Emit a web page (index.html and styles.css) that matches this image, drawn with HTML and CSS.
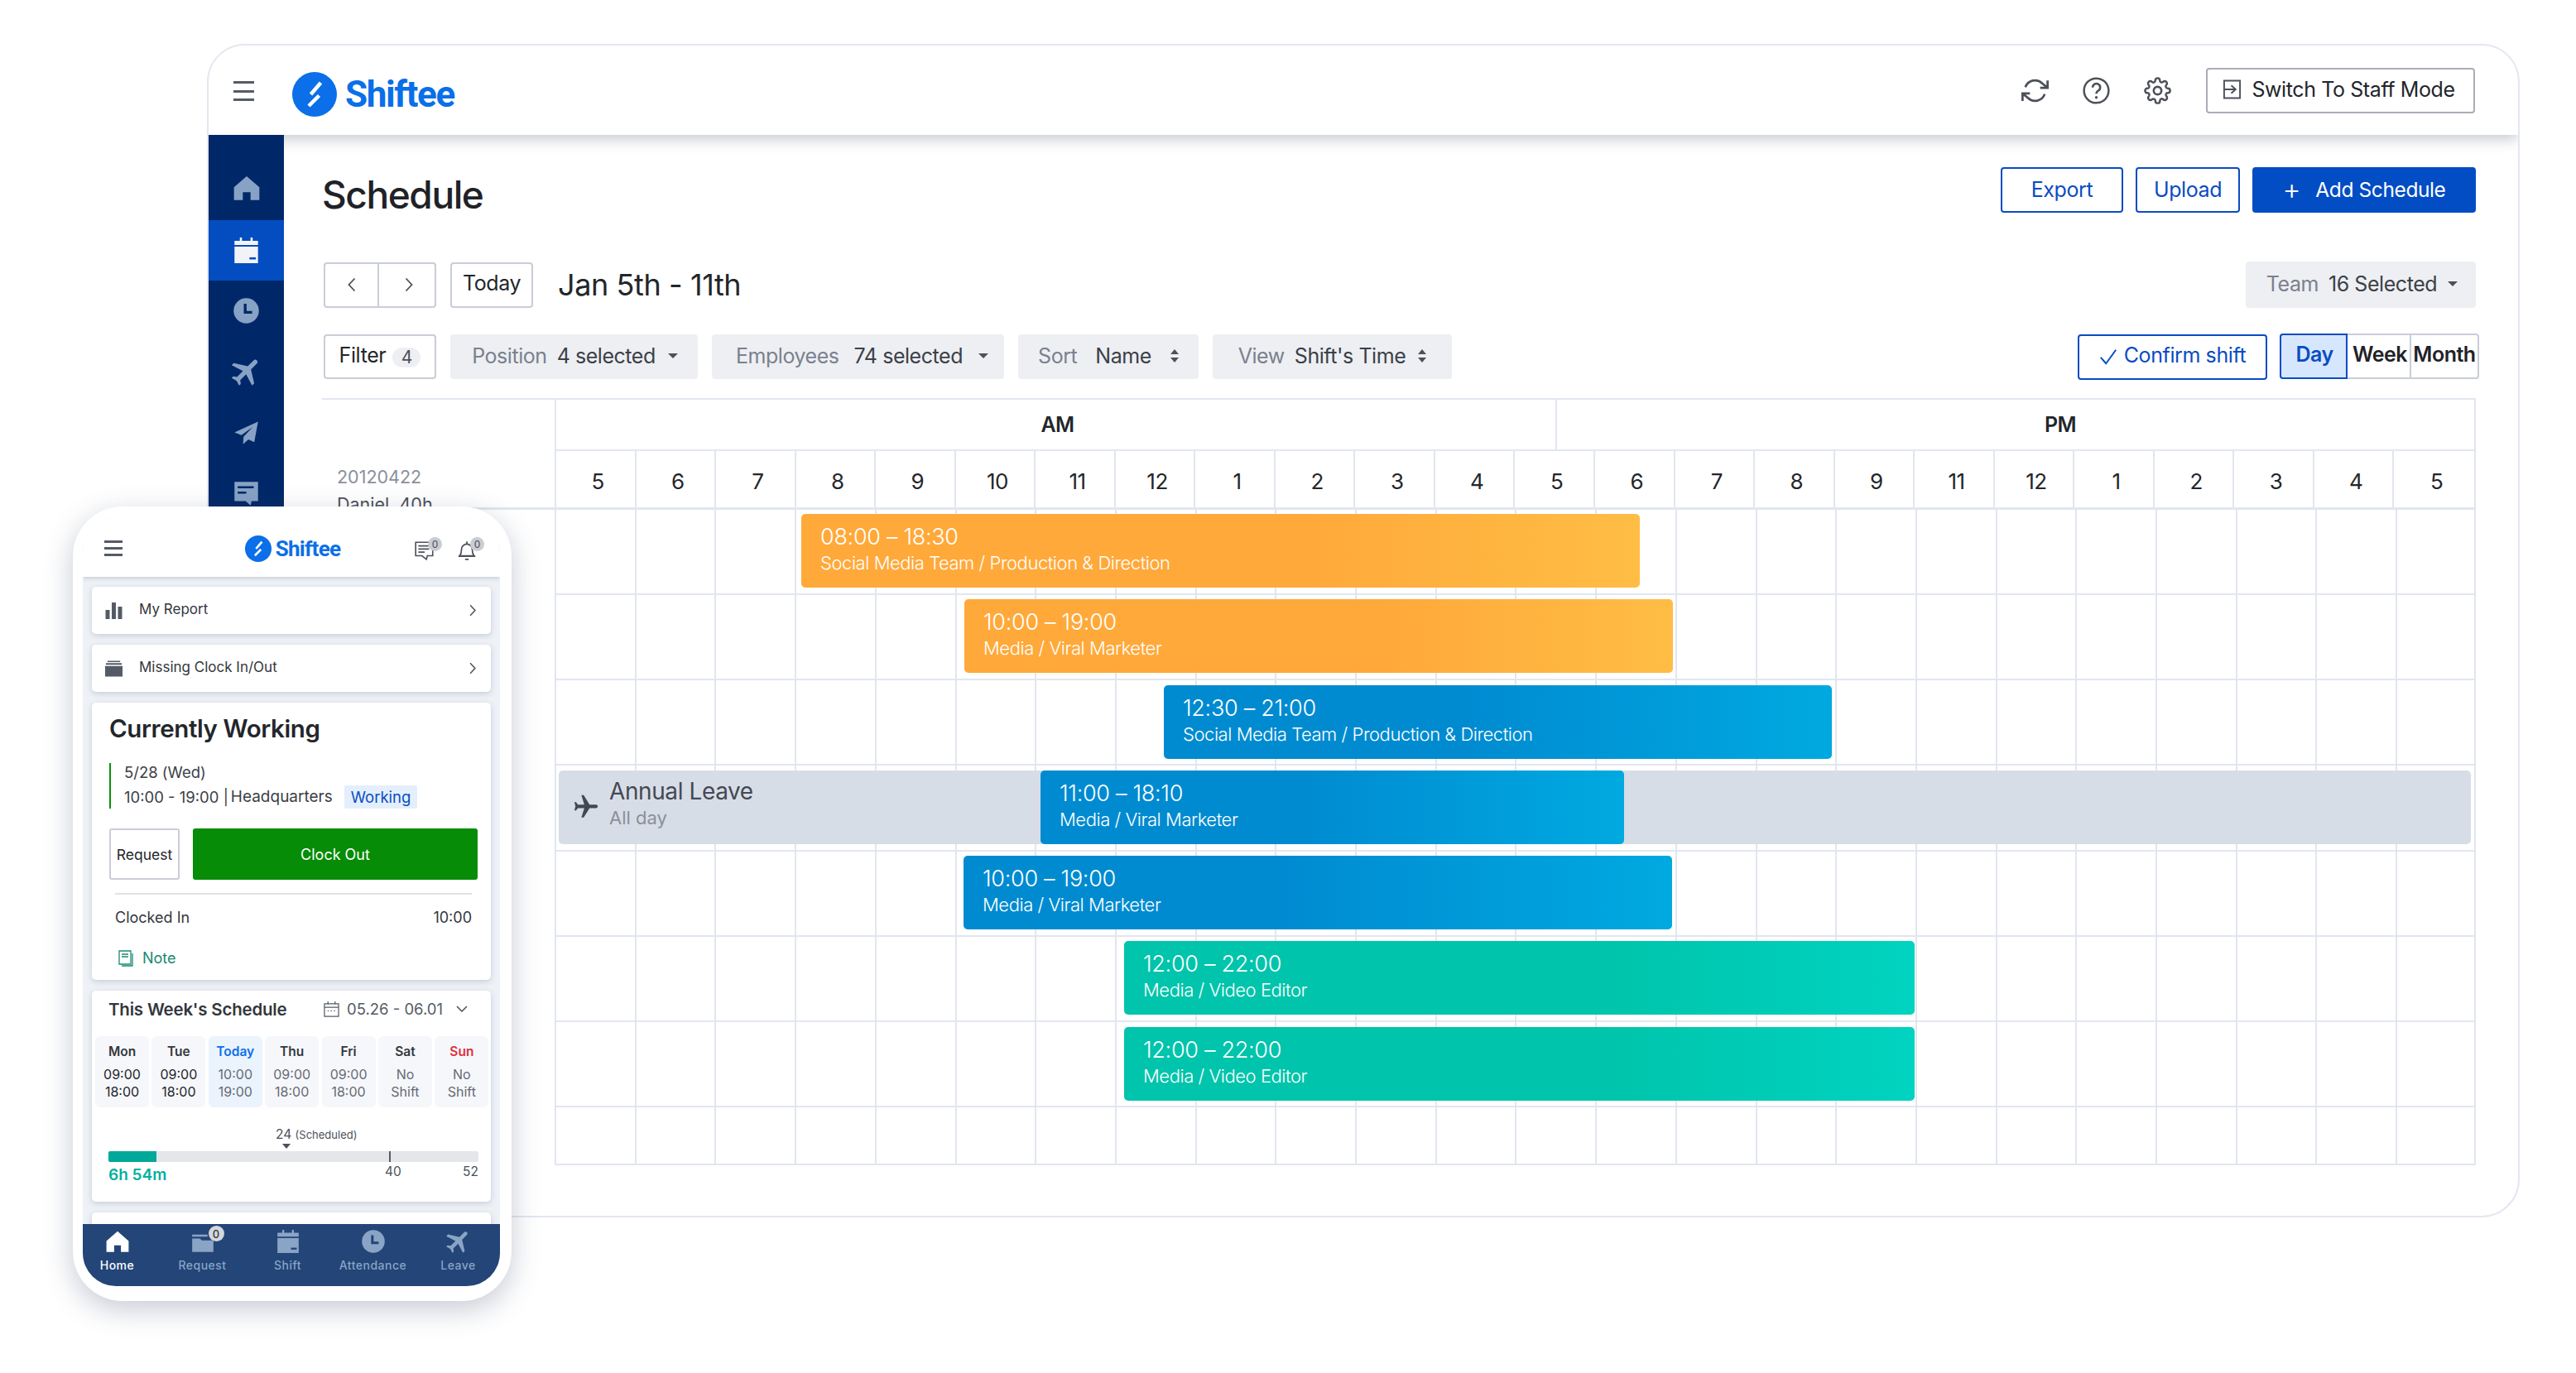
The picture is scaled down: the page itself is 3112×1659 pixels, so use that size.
FILE: index.html
```html
<!DOCTYPE html>
<html lang="en">
<head>
<meta charset="utf-8">
<title>Shiftee Schedule</title>
<link rel="stylesheet" href="styles.css">
</head>
<body>
<svg class="defs" width="0" height="0" aria-hidden="true">
  <symbol id="i-logo" viewBox="0 0 54 54"><circle cx="27" cy="27" r="27" fill="#0a6fe8"/><path d="M34.500 13 22.500 27M32.500 28.500 20 41" fill="none" stroke="#fff" stroke-width="4.500"/></symbol>
  <symbol id="i-home" viewBox="0 0 24 24"><path d="M12 1.500 0.500 11.500v11.500h8V16h7v7h8V11.500z" fill="currentColor"/></symbol>
  <symbol id="i-cal" viewBox="0 0 24 24"><path d="M6 0h2v3h8V0h2v3h5v4H1V3h5zM1 8.500h22V24H1z" fill="currentColor"/><path d="M15 18.500h6v2h-6z" fill="var(--cut)"/></symbol>
  <symbol id="i-clock" viewBox="0 0 24 24"><circle cx="12" cy="12" r="11.800" fill="currentColor"/><path d="M11 5.500v8h6.500" fill="none" stroke="var(--cut)" stroke-width="2.600"/></symbol>
  <symbol id="i-plane" viewBox="0 0 24 24"><path d="M21 16v-2l-8-5V3.500c0-.83-.67-1.500-1.500-1.500S10 2.670 10 3.500V9l-8 5v2l8-2.500V19l-2 1.500V22l3.500-1 3.500 1v-1.500L13 19v-5.500z" fill="currentColor"/></symbol>
  <symbol id="i-send" viewBox="0 0 24 24"><path d="M23 2 1 12l6.500 2.500L18 7l-8.500 9-.5 7 5-4.500 5.500 2.500z" fill="currentColor"/></symbol>
  <symbol id="i-chat" viewBox="0 0 24 24"><path d="M1 1h22v18h-6l-1 4-4.500-4H1z" fill="currentColor"/><path d="M4 5h15v2H4zM4 10h8v2H4z" fill="var(--cut)"/></symbol>
  <symbol id="i-chev" viewBox="0 0 12 20"><path d="M2.500 2.500 9.500 10l-7 7.500" fill="none" stroke="currentColor" stroke-width="1.800"/></symbol>
</svg>

<section class="window">
  <header class="topbar">
    <div class="burger"><i></i><i></i><i></i></div>
    <svg class="logo-mark"><use href="#i-logo"/></svg>
    <span class="logo-text">Shiftee</span>
    <div class="top-actions">
      <svg class="top-icon" viewBox="0 0 24 24"><path d="M23 3v6.500h-6.500M1 21v-6.500h6.500M3.500 9a9 9 0 0 1 14.800-3.400L23 9.500M1 14.500l4.700 3.900A9 9 0 0 0 20.500 15" fill="none" stroke="#4c5159" stroke-width="2"/></svg>
      <svg class="top-icon" viewBox="0 0 24 24"><circle cx="12" cy="12" r="10.800" fill="none" stroke="#4c5159" stroke-width="1.800"/><path d="M8.800 9.200a3.300 3.300 0 1 1 5 2.800c-1.200.7-1.800 1.300-1.800 2.800" fill="none" stroke="#4c5159" stroke-width="1.900"/><circle cx="12" cy="18" r="1.200" fill="#4c5159"/></svg>
      <svg class="top-icon" viewBox="0 0 24 24"><circle cx="12" cy="12" r="3.400" fill="none" stroke="#4c5159" stroke-width="1.900"/><path d="M19.400 15a1.650 1.650 0 0 0 .33 1.820l.06.06a2 2 0 0 1 0 2.830 2 2 0 0 1-2.830 0l-.06-.06a1.650 1.650 0 0 0-1.820-.33 1.650 1.650 0 0 0-1 1.510V21a2 2 0 0 1-2 2 2 2 0 0 1-2-2v-.09A1.650 1.650 0 0 0 9 19.400a1.650 1.650 0 0 0-1.820.33l-.06.06a2 2 0 0 1-2.830 0 2 2 0 0 1 0-2.830l.06-.06a1.650 1.650 0 0 0 .33-1.820 1.650 1.650 0 0 0-1.510-1H3a2 2 0 0 1-2-2 2 2 0 0 1 2-2h.09A1.650 1.650 0 0 0 4.600 9a1.650 1.650 0 0 0-.33-1.820l-.06-.06a2 2 0 0 1 0-2.830 2 2 0 0 1 2.830 0l.06.06a1.650 1.650 0 0 0 1.820.33H9a1.650 1.650 0 0 0 1-1.510V3a2 2 0 0 1 2-2 2 2 0 0 1 2 2v.09a1.650 1.650 0 0 0 1 1.510 1.650 1.650 0 0 0 1.820-.33l.06-.06a2 2 0 0 1 2.830 0 2 2 0 0 1 0 2.830l-.06.06a1.650 1.650 0 0 0-.33 1.820V9a1.650 1.650 0 0 0 1.510 1H21a2 2 0 0 1 2 2 2 2 0 0 1-2 2h-.09a1.650 1.650 0 0 0-1.510 1z" fill="none" stroke="#4c5159" stroke-width="1.800"/></svg>
      <button class="btn btn-staff">
        <svg class="staff-icon" viewBox="0 0 24 26"><path d="M2 2h20v22H2zM2 13h14M11 8l5.500 5-5.500 5" fill="none" stroke="#4c5159" stroke-width="2"/></svg>
        Switch To Staff Mode
      </button>
    </div>
  </header>

  <div class="app-body">
    <nav class="sidebar">
      <a class="side-item"><svg class="ic-home"><use href="#i-home"/></svg></a>
      <a class="side-item active"><svg><use href="#i-cal"/></svg></a>
      <a class="side-item"><svg><use href="#i-clock"/></svg></a>
      <a class="side-item"><svg class="rot45 ic-plane"><use href="#i-plane"/></svg></a>
      <a class="side-item"><svg><use href="#i-send"/></svg></a>
      <a class="side-item"><svg><use href="#i-chat"/></svg></a>
    </nav>

    <main class="main">
      <div class="row title-row">
        <h1 class="page-title">Schedule</h1>
        <div class="row-end">
          <button class="btn btn-outline btn-export">Export</button>
          <button class="btn btn-outline btn-upload">Upload</button>
          <button class="btn btn-primary"><span class="plus">+</span>Add Schedule</button>
        </div>
      </div>

      <div class="row date-row">
        <div class="pager">
          <button class="pager-btn"><svg viewBox="0 0 12 20"><path d="M9.500 2.500 2.500 10l7 7.500" fill="none" stroke="#4c5159" stroke-width="1.800"/></svg></button>
          <button class="pager-btn"><svg viewBox="0 0 12 20"><path d="M2.500 2.500 9.500 10l-7 7.500" fill="none" stroke="#4c5159" stroke-width="1.800"/></svg></button>
        </div>
        <button class="btn btn-today">Today</button>
        <span class="date-range">Jan 5th - 11th</span>
        <button class="pill pill-team"><span class="pill-label">Team</span><span>16 Selected</span><i class="caret"></i></button>
      </div>

      <div class="row filter-row">
        <button class="btn btn-filter">Filter <span class="count">4</span></button>
        <button class="pill pill-pos"><span class="pill-label">Position</span><span>4 selected</span><i class="caret"></i></button>
        <button class="pill pill-emp"><span class="pill-label">Employees</span><span>74 selected</span><i class="caret"></i></button>
        <button class="pill pill-sort"><span class="pill-label">Sort</span><span>Name</span><i class="updown"></i></button>
        <button class="pill pill-view"><span class="pill-label">View</span><span>Shift's Time</span><i class="updown"></i></button>
        <div class="row-end">
          <button class="btn btn-outline btn-confirm"><svg viewBox="0 0 24 24"><path d="M2 13l7 8L22 3" fill="none" stroke="#0a4cc2" stroke-width="2.200"/></svg>Confirm shift</button>
          <div class="seg">
            <span class="seg-item seg-on">Day</span>
            <span class="seg-item seg-week">Week</span>
            <span class="seg-item seg-month">Month</span>
          </div>
        </div>
      </div>

      <div class="timetable">
        <div class="tt-head">
          <div class="tt-owner">
            <div class="owner-id">20120422</div>
            <div class="owner-name">Daniel. 40h</div>
          </div>
          <div class="tt-scale">
            <div class="half-row">
              <div class="half half-am">AM</div>
              <div class="half half-pm">PM</div>
            </div>
            <div class="hours">
              <span>5</span><span>6</span><span>7</span><span>8</span><span>9</span><span>10</span><span>11</span><span>12</span><span>1</span><span>2</span><span>3</span><span>4</span><span>5</span><span>6</span><span>7</span><span>8</span><span>9</span><span>11</span><span>12</span><span>1</span><span>2</span><span>3</span><span>4</span><span>5</span>
            </div>
          </div>
        </div>
        <div class="tt-rows">
          <div class="tt-row">
            <div class="shift shift-orange" style="margin-left:296px;width:1013px"><b>08:00 – 18:30</b><small>Social Media Team / Production &amp; Direction</small></div>
          </div>
          <div class="tt-row">
            <div class="shift shift-orange" style="margin-left:493px;width:856px"><b>10:00 – 19:00</b><small>Media / Viral Marketer</small></div>
          </div>
          <div class="tt-row">
            <div class="shift shift-blue" style="margin-left:734px;width:807px"><b>12:30 – 21:00</b><small>Social Media Team / Production &amp; Direction</small></div>
          </div>
          <div class="tt-row">
            <div class="leave">
              <svg class="leave-icon"><use href="#i-plane"/></svg>
              <div class="leave-text"><b>Annual Leave</b><small>All day</small></div>
              <div class="shift shift-blue shift-over" style="left:582px;width:705px"><b>11:00 – 18:10</b><small>Media / Viral Marketer</small></div>
            </div>
          </div>
          <div class="tt-row">
            <div class="shift shift-blue" style="margin-left:492px;width:856px"><b>10:00 – 19:00</b><small>Media / Viral Marketer</small></div>
          </div>
          <div class="tt-row">
            <div class="shift shift-teal" style="margin-left:686px;width:955px"><b>12:00 – 22:00</b><small>Media / Video Editor</small></div>
          </div>
          <div class="tt-row">
            <div class="shift shift-teal" style="margin-left:686px;width:955px"><b>12:00 – 22:00</b><small>Media / Video Editor</small></div>
          </div>
          <div class="tt-row tt-row-last"></div>
        </div>
      </div>
    </main>
  </div>
</section>

<section class="phone">
  <div class="screen">
    <header class="ph-top">
      <div class="burger ph-burger"><i></i><i></i><i></i></div>
      <div class="ph-logo"><svg class="ph-mark"><use href="#i-logo"/></svg><span>Shiftee</span></div>
      <div class="ph-icons">
        <span class="ph-ico">
          <svg viewBox="0 0 24 24"><path d="M2 3h19v15h-6l-1 4-5-4H2zM5 7h12M5 10.500h12M5 14h7" fill="none" stroke="#4c5159" stroke-width="1.500"/></svg>
          <em>0</em>
        </span>
        <span class="ph-ico">
          <svg viewBox="0 0 24 24"><path d="M4 18c1.500-2 2-3 2-7a6 6 0 0 1 12 0c0 4 .5 5 2 7zM2.500 18.500h19M10 22h4M12 2v3" fill="none" stroke="#4c5159" stroke-width="1.600"/></svg>
          <em>0</em>
        </span>
      </div>
    </header>

    <div class="ph-content">
      <div class="card link-card">
        <svg class="link-icon" viewBox="0 0 20 20"><path d="M0 9h5v11H0zM7.500 0h5v20h-5zM15 5h5v15h-5z" fill="#555b66"/></svg>
        <span class="link-text">My Report</span>
        <svg class="link-chev"><use href="#i-chev"/></svg>
      </div>
      <div class="card link-card">
        <svg class="link-icon" viewBox="0 0 22 20"><path d="M3 0h16v1.500H3zM1 3h20v2H1zM0 6.500h22V20H0z" fill="#555b66"/></svg>
        <span class="link-text">Missing Clock In/Out</span>
        <svg class="link-chev"><use href="#i-chev"/></svg>
      </div>

      <div class="card work-card">
        <h2 class="work-title">Currently Working</h2>
        <div class="work-info">
          <div class="work-date">5/28 (Wed)</div>
          <div class="work-line">10:00 - 19:00 |<span class="work-site">Headquarters</span><span class="tag">Working</span></div>
        </div>
        <div class="work-btns">
          <button class="btn-request">Request</button>
          <button class="btn-clock">Clock Out</button>
        </div>
        <div class="clocked"><span>Clocked In</span><span>10:00</span></div>
        <div class="note">
          <svg viewBox="0 0 18 20"><path d="M1 1h14v16H1zM17 4v15H4M4 5h8M4 8h8" fill="none" stroke="#1a8a70" stroke-width="1.300"/></svg>
          Note
        </div>
      </div>

      <div class="card week-card">
        <div class="week-head">
          <h3>This Week's Schedule</h3>
          <div class="week-range">
            <svg class="week-cal" viewBox="0 0 20 20"><path d="M1 3h18v16H1zM1 7.500h18M5.500 0v4M14.500 0v4M5 12h1.500M9 12h1.500M13 12h1.500" fill="none" stroke="#555b66" stroke-width="1.300"/></svg>
            05.26 - 06.01
            <svg class="week-chev" viewBox="0 0 14 8"><path d="M1 1l6 6 6-6" fill="none" stroke="#4c5159" stroke-width="1.500"/></svg>
          </div>
        </div>
        <div class="days">
          <div class="day day-dark"><b>Mon</b><span>09:00</span><span>18:00</span></div>
          <div class="day day-dark"><b>Tue</b><span>09:00</span><span>18:00</span></div>
          <div class="day day-today"><b>Today</b><span>10:00</span><span>19:00</span></div>
          <div class="day"><b>Thu</b><span>09:00</span><span>18:00</span></div>
          <div class="day"><b>Fri</b><span>09:00</span><span>18:00</span></div>
          <div class="day"><b>Sat</b><span>No</span><span>Shift</span></div>
          <div class="day day-sun"><b>Sun</b><span>No</span><span>Shift</span></div>
        </div>
        <div class="meter">
          <div class="meter-flag">24 <small>(Scheduled)</small></div>
          <i class="meter-arrow"></i>
          <div class="meter-track"><i class="meter-fill"></i><i class="meter-tick"></i></div>
          <div class="meter-scale"><b>6h 54m</b><span class="m40">40</span><span class="m52">52</span></div>
        </div>
      </div>
      <div class="card stub-card"></div>
    </div>

    <nav class="tabbar">
      <div class="tabs">
        <a class="tab tab-on"><svg><use href="#i-home"/></svg>Home</a>
        <a class="tab"><span class="tab-ico"><svg viewBox="0 0 24 24"><path d="M1 5h16v2H1zM1 9h8l2 2h12v12H1z" fill="currentColor"/></svg><em>0</em></span>Request</a>
        <a class="tab tab-cut"><svg><use href="#i-cal"/></svg>Shift</a>
        <a class="tab tab-cut"><svg><use href="#i-clock"/></svg>Attendance</a>
        <a class="tab"><svg class="rot45 tab-plane"><use href="#i-plane"/></svg>Leave</a>
      </div>
    </nav>
  </div>
</section>
</body>
</html>
```

FILE: styles.css
```css
* { box-sizing: border-box; }
html, body { margin: 0; padding: 0; }
body {
  position: relative;
  width: 3112px;
  height: 1659px;
  overflow: hidden;
  background: #fff;
  font-family: Inter, "Noto Sans", sans-serif;
  color: #23262b;
  padding: 53px 0 0 250px;
}
.defs { position: absolute; }
button { font-family: inherit; margin: 0; cursor: pointer; }
h1, h2, h3 { margin: 0; }

/* Desktop window */
.window {
  width: 2794px;
  height: 1418px;
  background: #fff;
  border: 2px solid #e3e7ef;
  border-radius: 46px;
  overflow: hidden;
  display: flex;
  flex-direction: column;
}
.topbar {
  flex: none;
  height: 108px;
  display: flex;
  align-items: center;
  padding-left: 30px;
  background: #fff;
  box-shadow: 0 5px 16px rgba(50, 60, 85, .28);
  position: relative;
  z-index: 1;
}
.burger { width: 25px; display: flex; flex-direction: column; gap: 7.500px; margin-top: 2px; }
.burger i { display: block; height: 3px; background: #555b66; }
.logo-mark { width: 54px; height: 54px; margin: 9px 0 0 46px; }
.logo-text {
  margin: 9px 0 0 10px;
  font-family: Roboto, Inter, sans-serif;
  color: #0a6fe8;
  font-size: 44px;
  font-weight: 700;
  letter-spacing: -1.400px;
}
.top-actions {
  margin-left: auto;
  margin-right: 52px;
  display: flex;
  align-items: center;
}
.top-icon { width: 33px; height: 33px; margin-right: 41px; }
.top-icon:nth-child(3) { margin-right: 42px; }

.btn {
  height: 55px;
  display: inline-flex;
  align-items: center;
  justify-content: center;
  background: #fff;
  border: 2px solid #c9cdd6;
  border-radius: 4px;
  font-size: 25px;
  letter-spacing: -.400px;
  color: #23262b;
  padding: 0 0 2px;
}
.btn-staff { width: 325px; border-color: #a9adb8; gap: 12px; padding-right: 4px; }
.staff-icon { width: 23px; height: 26px; }
.btn-outline { border-color: #0a4cc2; color: #0a4cc2; }
.btn-export { width: 148px; }
.btn-upload { width: 126px; }
.btn-primary {
  width: 270px;
  background: #034dc4;
  border-color: #034dc4;
  color: #fff;
  font-size: 24.500px;
}
.plus { font-size: 34px; font-weight: 300; margin-right: 18px; line-height: 1; }

.app-body { flex: 1; display: flex; min-height: 0; }
.sidebar {
  flex: none;
  width: 91px;
  padding-top: 29px;
  background: #002868;
  position: relative;
  z-index: 2;
  --cut: #002868;
}
.side-item {
  display: flex;
  align-items: center;
  justify-content: center;
  height: 73.500px;
  color: #87a2c5;
}
.side-item:first-child { padding-bottom: 4px; }
.side-item svg { width: 31px; height: 31px; }
.side-item .ic-home { width: 32px; height: 32px; }
.side-item .ic-plane { width: 44px; height: 44px; }
.side-item.active { background: #034dc0; color: #f1f3f7; --cut: #034dc0; }
.rot45 { transform: rotate(45deg); }

.main { flex: 1; min-width: 0; padding: 39px 51px 0 46px; }
.row { display: flex; align-items: center; }
.row-end { margin-left: auto; display: flex; align-items: center; }
.title-row { height: 55px; }
.title-row .row-end { gap: 15px; }
.page-title { font-size: 46px; font-weight: 500; letter-spacing: -1.400px; color: #1f2227; margin-top: 10px; }

.date-row { height: 56px; margin-top: 59px; }
.pager {
  display: flex;
  width: 136px;
  height: 55px;
  margin-left: 2px;
  border: 2px solid #c9cdd6;
  border-radius: 4px;
}
.pager-btn {
  flex: 1;
  background: none;
  border: 0;
  display: flex;
  align-items: center;
  justify-content: center;
  padding: 0;
}
.pager-btn + .pager-btn { border-left: 2px solid #c9cdd6; padding-left: 4px; }
.pager-btn svg { width: 12px; height: 20px; }
.btn-today { width: 100px; margin-left: 17px; padding-bottom: 4px; }
.date-range { margin-left: 30px; font-size: 36px; letter-spacing: -.400px; color: #23262b; }

.pill {
  height: 54px;
  display: inline-flex;
  align-items: center;
  justify-content: center;
  gap: 12px;
  border: 0;
  border-radius: 4px;
  background: #edeff3;
  font-size: 25px;
  letter-spacing: -.450px;
  color: #3c4047;
  padding: 0 0 2px;
}
.pill-label { color: #7b818e; }
.pill-team { height: 56px; width: 278px; margin-left: auto; padding: 0 0 3px 3px; }
.pill-team .caret { margin-left: 1px; }
.caret {
  width: 0;
  height: 0;
  border-left: 6px solid transparent;
  border-right: 6px solid transparent;
  border-top: 6px solid #4c5159;
  margin-left: 3px;
}
.updown { position: relative; width: 10px; height: 16px; margin-left: 3px; }
.updown::before, .updown::after {
  content: "";
  position: absolute;
  left: 0;
  border-left: 5px solid transparent;
  border-right: 5px solid transparent;
}
.updown::before { top: 0; border-bottom: 6px solid #4c5159; }
.updown::after { bottom: 0; border-top: 6px solid #4c5159; }

.filter-row { height: 54px; margin-top: 32px; gap: 17px; }
.btn-filter { width: 136px; height: 54px; margin-left: 2px; gap: 8px; padding-bottom: 5px; }
.count {
  width: 34px;
  height: 24px;
  margin-top: 6px;
  border-radius: 12px;
  background: #edeff3;
  color: #4c5159;
  font-size: 21px;
  display: inline-flex;
  align-items: center;
  justify-content: center;
}
.pill-pos { width: 299px; padding-left: 2px; }
.pill-emp { width: 353px; gap: 18px; padding-left: 10px; }
.pill-emp .caret { margin-left: 1px; }
.pill-sort { width: 218px; gap: 22px; }
.pill-sort .updown { margin-left: 1px; }
.pill-view { width: 289px; }
.filter-row .row-end { gap: 15px; }
.btn-confirm { width: 229px; gap: 8px; padding-bottom: 5px; }
.btn-confirm svg { width: 22px; height: 22px; margin-top: 5px; }
.seg {
  display: flex;
  width: 241px;
  height: 55px;
  margin-right: -4px;
  margin-top: -2px;
  border: 2px solid #c9cdd6;
  border-left: 0;
  border-radius: 4px;
}
.seg-item {
  display: flex;
  align-items: center;
  justify-content: center;
  font-size: 25px;
  font-weight: 600;
  letter-spacing: -.500px;
  color: #1f2227;
  padding-bottom: 5px;
}
.seg-on {
  width: 82px;
  margin: -2px 0;
  padding-left: 2px;
  background: #d6e6fc;
  border: 2px solid #0a4cc2;
  border-radius: 4px 0 0 4px;
  color: #0a4cc2;
}
.seg-week { width: 77px; padding-left: 3px; border-right: 2px solid #c9cdd6; }
.seg-month { width: 80px; }

/* Timetable */
.timetable { margin-top: 23px; font-size: 24px; }
.tt-head {
  display: flex;
  border-top: 2px solid #e1e6ef;
  border-bottom: 3px solid #e1e6ef;
  height: 134.500px;
}
.tt-owner { width: 281px; padding: 80px 0 0 18px; overflow: hidden; }
.owner-id { font-size: 21.500px; color: #8a909c; line-height: 26px; }
.owner-name { font-size: 21.500px; color: #4c5159; line-height: 30px; margin-top: 5px; }
.tt-scale {
  flex: 1;
  min-width: 0;
  display: flex;
  flex-direction: column;
  border-left: 2px solid #e1e6ef;
  border-right: 2px solid #e1e6ef;
}
.half-row {
  flex: none;
  height: 62px;
  display: flex;
  border-bottom: 2px solid #e1e6ef;
  font-size: 25px;
  font-weight: 600;
  letter-spacing: -.500px;
}
.half { display: flex; align-items: center; justify-content: center; }
.half-am { width: 1209px; border-right: 2px solid #e1e6ef; padding-left: 4px; }
.half-pm { flex: 1; padding-left: 108px; }
.hours {
  flex: 1;
  display: grid;
  grid-template-columns: repeat(24, 1fr);
  font-size: 26px;
  letter-spacing: -.500px;
}
.hours span {
  display: flex;
  align-items: center;
  justify-content: center;
  padding: 6px 0 0 6px;
  border-right: 2px solid #e1e6ef;
}
.hours span:last-child { border-right: 0; }

.tt-rows {
  margin-left: 281px;
  border-left: 2px solid #e1e6ef;
  border-right: 2px solid #e1e6ef;
}
.tt-row {
  height: 103.250px;
  padding-top: 5.500px;
  border-bottom: 2px solid #e1e6ef;
  background-image: repeating-linear-gradient(90deg, transparent 0 94.700px, #e1e6ef 94.700px 96.700px);
}
.tt-row-last { height: 70px; }

.shift {
  height: 89px;
  border-radius: 5px;
  padding: 10px 0 0 23px;
  color: #fff;
  overflow: hidden;
  white-space: nowrap;
}
.shift b { display: block; font-size: 27px; font-weight: 300; letter-spacing: -.300px; line-height: 35px; }
.shift small { display: block; font-size: 22px; font-weight: 300; line-height: 29px; letter-spacing: -.450px; }
.shift-orange { background: linear-gradient(90deg, #ffa93a 0 60%, #ffbd45 100%); }
.shift-blue { background: linear-gradient(90deg, #008bd1 0 45%, #00a9e0 100%); }
.shift-teal { background: linear-gradient(90deg, #00c4ab 0 60%, #00d3c0 100%); }

.leave {
  position: relative;
  height: 89px;
  margin: 0 4px 0 3px;
  background: #d7dde6;
  border-radius: 5px;
  display: flex;
  align-items: center;
  padding-left: 16px;
}
.leave-icon { width: 34px; height: 34px; color: #434954; transform: rotate(90deg); }
.leave-text { margin: -8px 0 0 11px; }
.leave-text b { display: block; font-size: 28px; font-weight: 400; letter-spacing: -.400px; color: #434954; line-height: 34px; }
.leave-text small { display: block; font-size: 22px; color: #8a909c; line-height: 30px; }
.shift-over { position: absolute; top: 0; }

/* Phone */
.phone {
  position: absolute;
  left: 88px;
  top: 612px;
  width: 530px;
  height: 960px;
  padding: 14px 14px 18px 12px;
  background: #fff;
  border-radius: 60px;
  box-shadow: 0 10px 34px rgba(50, 65, 100, .28);
  z-index: 5;
}
.screen {
  position: relative;
  height: 100%;
  background: #eef2f7;
  border-radius: 40px;
  overflow: hidden;
  display: flex;
  flex-direction: column;
}
.ph-top {
  flex: none;
  height: 71px;
  display: grid;
  grid-template-columns: 1fr auto 1fr;
  align-items: center;
  padding: 2px 27px 0 26px;
  background: #fff;
  box-shadow: 0 2px 5px rgba(50, 60, 85, .2);
  position: relative;
}
.ph-burger { width: 22px; gap: 5px; margin-top: 0; }
.ph-burger i { height: 3px; }
.ph-logo {
  display: flex;
  align-items: center;
  gap: 5px;
  margin-left: 4px;
  font-family: Roboto, Inter, sans-serif;
  color: #0a6fe8;
  font-size: 26px;
  font-weight: 700;
  letter-spacing: -.700px;
}
.ph-mark { width: 32px; height: 32px; }
.ph-icons { display: flex; justify-content: flex-end; gap: 25px; }
.ph-ico { position: relative; width: 26px; height: 26px; margin-top: 4px; }
.ph-ico svg { width: 26px; height: 26px; display: block; }
.ph-ico em {
  position: absolute;
  top: -3px;
  right: -8px;
  width: 17px;
  height: 17px;
  border-radius: 50%;
  background: #c9ccd3;
  font-style: normal;
  font-size: 12px;
  color: #4c5159;
  display: flex;
  align-items: center;
  justify-content: center;
}
.ph-content {
  flex: 1;
  min-height: 0;
  overflow: hidden;
  padding: 12px 11px 0;
  display: flex;
  flex-direction: column;
  gap: 13px;
}
.card {
  flex: none;
  background: #fff;
  border-radius: 5px;
  box-shadow: 0 2px 7px rgba(60, 75, 105, .22);
}
.link-card {
  height: 57px;
  display: flex;
  align-items: center;
  padding: 0 16px;
  font-size: 17px;
  color: #33373d;
}
.link-text { margin-top: -3px; }
.link-icon { width: 21px; height: 20px; margin-right: 20px; }
.link-chev { width: 10px; height: 17px; margin-left: auto; margin-right: 1px; color: #4c5159; }

.work-card { height: 335px; padding: 12px 16px 0 21px; }
.work-title { font-size: 29.500px; font-weight: 600; line-height: 38px; color: #23262b; letter-spacing: -.400px; }
.work-info {
  margin-top: 23px;
  height: 55px;
  padding-left: 16px;
  border-left: 2px solid #069406;
  font-size: 18.500px;
  color: #3c4047;
}
.work-date { line-height: 22px; }
.work-line { display: flex; align-items: center; margin-top: 5px; line-height: 28px; white-space: pre; }
.work-site { margin-left: 3px; font-size: 19px; }
.tag {
  margin-left: 14px;
  padding: 0 8px;
  height: 28px;
  display: flex;
  align-items: center;
  background: #e3effc;
  color: #0a4cc2;
  font-size: 18.500px;
  border-radius: 2px;
}
.work-btns { display: flex; gap: 16px; margin-top: 24px; height: 62px; }
.btn-request {
  width: 85px;
  background: #fff;
  border: 2px solid #c9cdd6;
  border-radius: 3px;
  font-size: 17.500px;
  color: #23262b;
  padding: 0;
}
.btn-clock {
  flex: 1;
  background: #068c06;
  border: 0;
  border-radius: 3px;
  color: #fff;
  font-size: 18px;
}
.clocked {
  margin: 16px 7px 0;
  padding-top: 16px;
  border-top: 2px solid #dfe2e8;
  display: flex;
  justify-content: space-between;
  font-size: 18px;
  line-height: 24px;
  color: #33373d;
}
.note {
  margin: 26px 0 0 11px;
  display: flex;
  align-items: center;
  gap: 11px;
  font-size: 18px;
  color: #1a8a70;
}
.note svg { width: 18px; height: 20px; }

.week-card { height: 255px; padding: 9px 3px 0 4px; }
.week-head { display: flex; align-items: center; padding: 0 25px 0 16px; height: 26px; }
.week-head h3 { font-size: 20.500px; font-weight: 600; color: #33373d; letter-spacing: -.200px; }
.week-range {
  margin-left: auto;
  display: flex;
  align-items: center;
  font-size: 18.500px;
  color: #555b66;
}
.week-cal { width: 19px; height: 19px; margin-right: 9px; }
.week-chev { width: 14px; height: 8px; margin-left: 16px; }
.days {
  display: grid;
  grid-template-columns: repeat(7, 65px);
  column-gap: 3.400px;
  margin-top: 20px;
}
.day {
  height: 86px;
  padding-top: 9px;
  background: #f6f7fa;
  border-radius: 6px;
  text-align: center;
  font-size: 16px;
  line-height: 20.500px;
  color: #666b75;
}
.day b { display: block; font-size: 15.500px; font-weight: 600; line-height: 19px; margin-bottom: 8px; color: #33373d; }
.day span { display: block; }
.day-dark { color: #23262b; }
.day-today { background: #ebf3fd; }
.day-today b { color: #0a6fe8; }
.day-sun b { color: #e0303c; }

.meter { padding: 24px 12px 0 16px; position: relative; }
.meter-flag { padding-left: 202px; font-size: 15.500px; line-height: 18px; color: #4c5159; }
.meter-flag small { font-size: 13px; }
.meter-arrow {
  display: block;
  width: 0;
  height: 0;
  margin: 2px 0 3px 210px;
  border-left: 5px solid transparent;
  border-right: 5px solid transparent;
  border-top: 6px solid #4c5159;
}
.meter-track { position: relative; height: 13px; background: #e4e6ea; border-radius: 2px; }
.meter-fill { position: absolute; left: 0; top: 0; bottom: 0; width: 58px; background: #00a89a; border-radius: 2px 0 0 2px; }
.meter-tick { position: absolute; left: 339px; top: 0; bottom: 0; width: 2px; background: #555b66; }
.meter-scale { position: relative; height: 30px; }
.meter-scale b { position: absolute; left: 0; top: 4px; font-size: 19px; font-weight: 600; color: #00b0a0; }
.meter-scale span { position: absolute; top: 2px; font-size: 15.500px; color: #4c5159; }
.m40 { left: 334px; }
.m52 { right: 0; }
.stub-card { height: 40px; }

.tabbar {
  position: absolute;
  left: 0;
  right: 0;
  bottom: 0;
  height: 75px;
  background: #234577;
  --cut: #8aa4c6;
}
.tabs {
  display: grid;
  grid-template-columns: repeat(5, 103px);
  margin-left: -10px;
}
.tab {
  height: 75px;
  padding-top: 7px;
  display: flex;
  flex-direction: column;
  align-items: center;
  gap: 6px;
  color: #8aa4c6;
  font-size: 14px;
  font-weight: 500;
  letter-spacing: .500px;
  white-space: nowrap;
}
.tab svg { width: 28px; height: 28px; display: block; }
.tab-cut { --cut: #234577; }
.tab .tab-plane { width: 36px; height: 36px; margin: -4px; }
.tab-on { color: #fff; }
.tab-ico { position: relative; width: 28px; height: 28px; }
.tab-ico em {
  position: absolute;
  top: -5px;
  right: -12px;
  width: 19px;
  height: 19px;
  border-radius: 50%;
  background: #d4d7dd;
  font-style: normal;
  font-size: 13px;
  letter-spacing: 0;
  color: #33373d;
  display: flex;
  align-items: center;
  justify-content: center;
}
```
